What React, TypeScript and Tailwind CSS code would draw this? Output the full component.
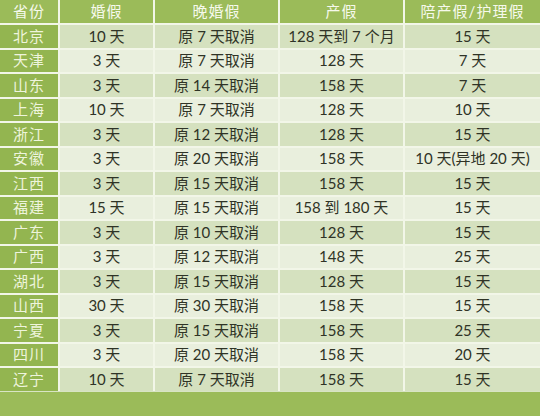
import React from 'react';

const rows: string[][] = [
  ['北京', '10 天', '原 7 天取消', '128 天到 7 个月', '15 天'],
  ['天津', '3 天', '原 7 天取消', '128 天', '7 天'],
  ['山东', '3 天', '原 14 天取消', '158 天', '7 天'],
  ['上海', '10 天', '原 7 天取消', '128 天', '10 天'],
  ['浙江', '3 天', '原 12 天取消', '128 天', '15 天'],
  ['安徽', '3 天', '原 20 天取消', '158 天', '10 天(异地 20 天)'],
  ['江西', '3 天', '原 15 天取消', '158 天', '15 天'],
  ['福建', '15 天', '原 15 天取消', '158 到 180 天', '15 天'],
  ['广东', '3 天', '原 10 天取消', '128 天', '15 天'],
  ['广西', '3 天', '原 12 天取消', '148 天', '25 天'],
  ['湖北', '3 天', '原 15 天取消', '128 天', '15 天'],
  ['山西', '30 天', '原 30 天取消', '158 天', '15 天'],
  ['宁夏', '3 天', '原 15 天取消', '158 天', '25 天'],
  ['四川', '3 天', '原 20 天取消', '158 天', '20 天'],
  ['辽宁', '10 天', '原 7 天取消', '158 天', '15 天'],
];

const headers = ['省份', '婚假', '晚婚假', '产假', '陪产假/护理假'];

export default function App() {
  return (
    <div
      className="w-[540px] h-[416px] overflow-hidden bg-[#9bbb59] flex flex-col"
      style={{ fontFamily: 'Lato, "Noto Sans CJK SC", sans-serif' }}
    >
      <div className="grid grid-cols-[58px_93px_123px_123px_1fr] gap-[2px] bg-[#f2f6e8] text-[15px] leading-none">
        {headers.map((h) => (
          <div
            key={h}
            className="h-[23px] bg-[#9bbb59] text-[#f6f9ec] flex items-center justify-center tracking-[1px]"
          >
            {h}
          </div>
        ))}
        {rows.map((r, i) => (
          <React.Fragment key={r[0]}>
            <div className="h-[22.5px] bg-[#93b550] text-[#eef4dc] flex items-center justify-center tracking-[1px]">
              {r[0]}
            </div>
            {r.slice(1).map((c, j) => (
              <div
                key={j}
                className={`h-[22.5px] flex items-center justify-center text-[#2f3326] whitespace-nowrap ${
                  i % 2 === 0 ? 'bg-[#d5e1bf]' : 'bg-[#e9efdd]'
                }`}
              >
                {c}
              </div>
            ))}
          </React.Fragment>
        ))}
      </div>
      <div className="flex-1 border-t border-[#d8e4c4] bg-[#9bbb59]" />
    </div>
  );
}
